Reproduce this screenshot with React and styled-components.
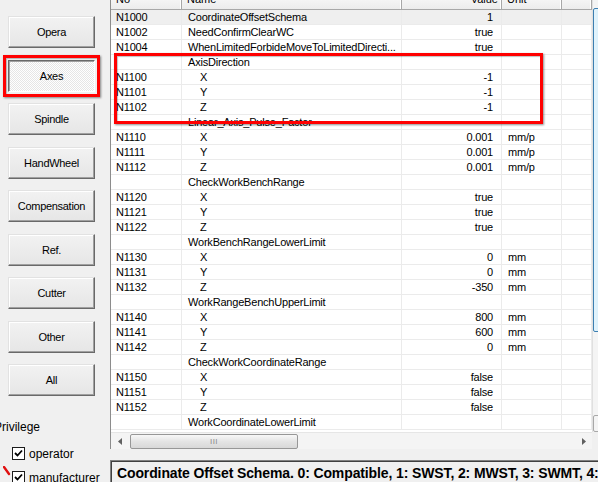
import React from 'react';
import styled, { createGlobalStyle, css } from 'styled-components';

const GlobalStyle = createGlobalStyle`
  html, body {
    margin: 0;
    padding: 0;
    background: #f0f0f0;
    overflow: hidden;
  }
  body {
    font-family: "Liberation Sans", Arial, sans-serif;
    font-size: 11px;
    color: #000;
  }
`;

const BUTTONS = ['Opera', 'Axes', 'Spindle', 'HandWheel', 'Compensation', 'Ref.', 'Cutter', 'Other', 'All'];

const axis = (base, values, unit = '') =>
  ['X', 'Y', 'Z'].map((n, i) => ({ type: 'axis', no: `N${base + i}`, name: n, value: values[i], unit }));

const ROWS = [
  { type: 'item', no: 'N1000', name: 'CoordinateOffsetSchema', value: '1', selected: true },
  { type: 'item', no: 'N1002', name: 'NeedConfirmClearWC', value: 'true' },
  { type: 'item', no: 'N1004', name: 'WhenLimitedForbideMoveToLimitedDirecti...', value: 'true' },
  { type: 'group', name: 'AxisDirection' },
  ...axis(1100, ['-1', '-1', '-1']),
  { type: 'group', name: 'Linear_Axis_Pulse_Factor' },
  ...axis(1110, ['0.001', '0.001', '0.001'], 'mm/p'),
  { type: 'group', name: 'CheckWorkBenchRange' },
  ...axis(1120, ['true', 'true', 'true']),
  { type: 'group', name: 'WorkBenchRangeLowerLimit' },
  ...axis(1130, ['0', '0', '-350'], 'mm'),
  { type: 'group', name: 'WorkRangeBenchUpperLimit' },
  ...axis(1140, ['800', '600', '0'], 'mm'),
  { type: 'group', name: 'CheckWorkCoordinateRange' },
  ...axis(1150, ['false', 'false', 'false']),
  { type: 'group', name: 'WorkCoordinateLowerLimit' },
];

const COLS = '71px 220px 100px 60px 30px';

const Root = styled.div`
  display: grid;
  grid-template-columns: 110px 499px;
  width: 609px;
  height: 482px;
  overflow: hidden;
`;

const Sidebar = styled.div`
  display: flex;
  flex-direction: column;
  padding: 16px 0 0 8px;
`;

const ButtonStack = styled.div`
  display: flex;
  flex-direction: column;
  gap: 11.5px;
`;

const ButtonWrap = styled.div`
  position: relative;
  width: 87px;
`;

const NavButton = styled.div`
  box-sizing: border-box;
  height: 32px;
  display: flex;
  align-items: center;
  justify-content: center;
  letter-spacing: -0.3px;
  border: 1px solid;
  border-color: #e2e2e2 #696969 #696969 #e2e2e2;
  box-shadow: inset -1px -1px #a0a0a0, inset 1px 1px #ffffff;
  background: linear-gradient(#f2f2f2, #e6e6e6);
  ${(p) =>
    p.$pressed &&
    css`
      border-color: #696969 #ffffff #ffffff #696969;
      box-shadow: inset 1px 1px #a0a0a0;
      background: repeating-conic-gradient(#ffffff 0 25%, #e6e6e6 0 50%) 0 0 / 2px 2px;
    `}
`;

const Highlight = styled.div`
  position: absolute;
  inset: ${(p) => p.$inset};
  border: 3px solid #ff0000;
  box-shadow: 1px 1px 2px rgba(0, 0, 0, 0.45), inset 1px 1px 1px rgba(0, 0, 0, 0.25);
  pointer-events: none;
`;

const PrivilegeLabel = styled.div`
  margin: 24px 0 0 -14px;
  line-height: 15px;
  font-size: 12px;
`;

const CheckList = styled.div`
  display: flex;
  flex-direction: column;
  gap: 11px;
  margin: 12px 0 0 4px;
`;

const CheckRow = styled.div`
  position: relative;
  display: flex;
  align-items: center;
  gap: 4px;
  height: 13px;
  font-size: 12px;
`;

const Box = styled.div`
  box-sizing: border-box;
  width: 13px;
  height: 13px;
  border: 1px solid #1c1c1c;
  background: #fff;
  display: flex;
  align-items: center;
  justify-content: center;
`;

const PenMark = styled.svg`
  position: absolute;
  left: -9px;
  top: -5px;
`;

const Checkbox = ({ label, marked }) => (
  <CheckRow>
    {marked && (
      <PenMark width="8" height="10" viewBox="0 0 8 10">
        <path d="M1 1 L6 8" stroke="#e01010" strokeWidth="2.4" strokeLinecap="round" />
      </PenMark>
    )}
    <Box>
      <svg width="9" height="9" viewBox="0 0 9 9">
        <path d="M1 4 L3.5 6.5 L8 1.5" fill="none" stroke="#000" strokeWidth="1.8" />
      </svg>
    </Box>
    {label}
  </CheckRow>
);

const Main = styled.div`
  display: flex;
  flex-direction: column;
`;

const TableFrame = styled.div`
  display: flex;
  flex-direction: column;
  margin-top: -11px;
  border-left: 1px solid #8c8c8c;
`;

const GridArea = styled.div`
  display: flex;
  height: 443px;
`;

const Table = styled.div`
  position: relative;
  width: 481px;
  background: #fff;
`;

const HeaderRow = styled.div`
  display: grid;
  grid-template-columns: ${COLS};
  height: 21px;
  box-sizing: border-box;
  border-bottom: 1px solid #a8a8a8;
  background: linear-gradient(#ffffff, #ececec);
`;

const HeaderCell = styled.div`
  display: flex;
  align-items: center;
  justify-content: ${(p) => (p.$right ? 'flex-end' : 'flex-start')};
  padding: ${(p) => (p.$right ? '0 3px 0 0' : '0 0 0 5px')};
  border-right: 1px solid #a8a8a8;
  box-shadow: inset -1px 0 #ffffff;
  line-height: 13px;
`;

const Body = styled.div`
  position: relative;
`;

const Row = styled.div`
  display: grid;
  grid-template-columns: ${COLS};
  height: 15px;
  background: ${(p) => (p.$selected ? '#efefef' : '#ffffff')};
`;

const Cell = styled.div`
  box-sizing: border-box;
  border-right: 1px solid #ebebeb;
  border-bottom: 1px solid #ebebeb;
  line-height: 14px;
  white-space: nowrap;
  overflow: hidden;
  letter-spacing: -0.2px;
  padding-left: ${(p) => p.$pad || 0}px;
  text-align: ${(p) => (p.$right ? 'right' : 'left')};
  padding-right: ${(p) => (p.$right ? 8 : 0)}px;
`;

const VScroll = styled.div`
  width: 17px;
  display: flex;
  flex-direction: column;
  background: #f4f4f4;
  border-left: 1px solid #e0e0e0;
`;

const ScrollButton = styled.div`
  box-sizing: border-box;
  width: ${(p) => (p.$w ? `${p.$w}px` : '100%')};
  height: 17px;
  flex: none;
  display: flex;
  align-items: center;
  justify-content: center;
  border: 1px solid ${(p) => (p.$framed ? '#a8a8a8' : 'transparent')};
  border-radius: 2px;
`;

const VThumb = styled.div`
  box-sizing: border-box;
  margin-top: 2px;
  height: 324px;
  flex: none;
  border: 1px solid #3c7fb1;
  border-radius: 2px;
  background: linear-gradient(90deg, #e3f4fc, #c9e7f8);
`;

const Spacer = styled.div`
  flex: 1;
`;

const HScrollRow = styled.div`
  display: flex;
  height: 17px;
`;

const HScroll = styled.div`
  width: 481px;
  display: flex;
  align-items: center;
  background: #f4f4f4;
  border-top: 1px solid #e6e6e6;
  box-sizing: border-box;
`;

const HThumb = styled.div`
  box-sizing: border-box;
  width: 168px;
  height: 15px;
  margin-left: 2px;
  border: 1px solid #979797;
  border-radius: 2px;
  background: linear-gradient(#f8f8f8, #e4e4e4 50%, #d8d8d8);
  display: flex;
  align-items: center;
  justify-content: center;
  color: #8a8a8a;
  font-size: 8px;
  letter-spacing: 0.5px;
`;

const Corner = styled.div`
  width: 17px;
  background: #f0f0f0;
`;

const StatusBox = styled.div`
  margin-top: 11px;
  height: 26px;
  box-sizing: border-box;
  border-top: 1px solid #808080;
  border-left: 1px solid #808080;
  box-shadow: inset 1px 1px #404040;
  display: flex;
  align-items: center;
  padding: 0 0 2px 6px;
  font-size: 14px;
  letter-spacing: -0.12px;
  font-weight: bold;
  white-space: nowrap;
  overflow: hidden;
`;

const Arrow = ({ dir }) => {
  const d = {
    left: 'M4 0 L0 3.5 L4 7 Z',
    right: 'M0 0 L4 3.5 L0 7 Z',
    down: 'M0 0 L7 0 L3.5 4 Z',
  }[dir];
  const w = dir === 'down' ? 7 : 4;
  const h = dir === 'down' ? 4 : 7;
  return (
    <svg width={w} height={h} viewBox={`0 0 ${w} ${h}`}>
      <path d={d} fill="#606060" />
    </svg>
  );
};

const TableRow = ({ row }) => {
  if (row.type === 'group') {
    return (
      <Row>
        <Cell />
        <Cell $pad={6}>{row.name}</Cell>
        <Cell />
        <Cell />
        <Cell />
      </Row>
    );
  }
  return (
    <Row $selected={row.selected}>
      <Cell $pad={5}>{row.no}</Cell>
      <Cell $pad={row.type === 'axis' ? 18 : 6}>{row.name}</Cell>
      <Cell $right>{row.value}</Cell>
      <Cell $pad={6}>{row.unit}</Cell>
      <Cell />
    </Row>
  );
};

export default function App() {
  return (
    <>
      <GlobalStyle />
      <Root>
        <Sidebar>
          <ButtonStack>
            {BUTTONS.map((b) => (
              <ButtonWrap key={b}>
                <NavButton $pressed={b === 'Axes'}>{b}</NavButton>
                {b === 'Axes' && <Highlight $inset="-5px -5px -5px -5px" />}
              </ButtonWrap>
            ))}
          </ButtonStack>
          <PrivilegeLabel>Privilege</PrivilegeLabel>
          <CheckList>
            <Checkbox label="operator" />
            <Checkbox label="manufacturer" marked />
          </CheckList>
        </Sidebar>

        <Main>
          <TableFrame>
            <GridArea>
              <Table>
                <HeaderRow>
                  <HeaderCell>No</HeaderCell>
                  <HeaderCell>Name</HeaderCell>
                  <HeaderCell $right>Value</HeaderCell>
                  <HeaderCell>Unit</HeaderCell>
                  <HeaderCell />
                </HeaderRow>
                <Body>
                  {ROWS.map((r, i) => (
                    <TableRow key={i} row={r} />
                  ))}
                  <Highlight $inset="43px 49px auto 3px" style={{ height: 65 }} />
                </Body>
              </Table>
              <VScroll>
                <ScrollButton />
                <VThumb />
                <Spacer />
                <ScrollButton $framed>
                  <Arrow dir="down" />
                </ScrollButton>
              </VScroll>
            </GridArea>
            <HScrollRow>
              <HScroll>
                <ScrollButton $w={17}>
                  <Arrow dir="left" />
                </ScrollButton>
                <HThumb>III</HThumb>
                <Spacer />
                <ScrollButton $w={17}>
                  <Arrow dir="right" />
                </ScrollButton>
              </HScroll>
              <Corner />
            </HScrollRow>
          </TableFrame>
          <StatusBox>Coordinate Offset Schema. 0: Compatible, 1: SWST, 2: MWST, 3: SWMT, 4: MWMT</StatusBox>
        </Main>
      </Root>
    </>
  );
}
